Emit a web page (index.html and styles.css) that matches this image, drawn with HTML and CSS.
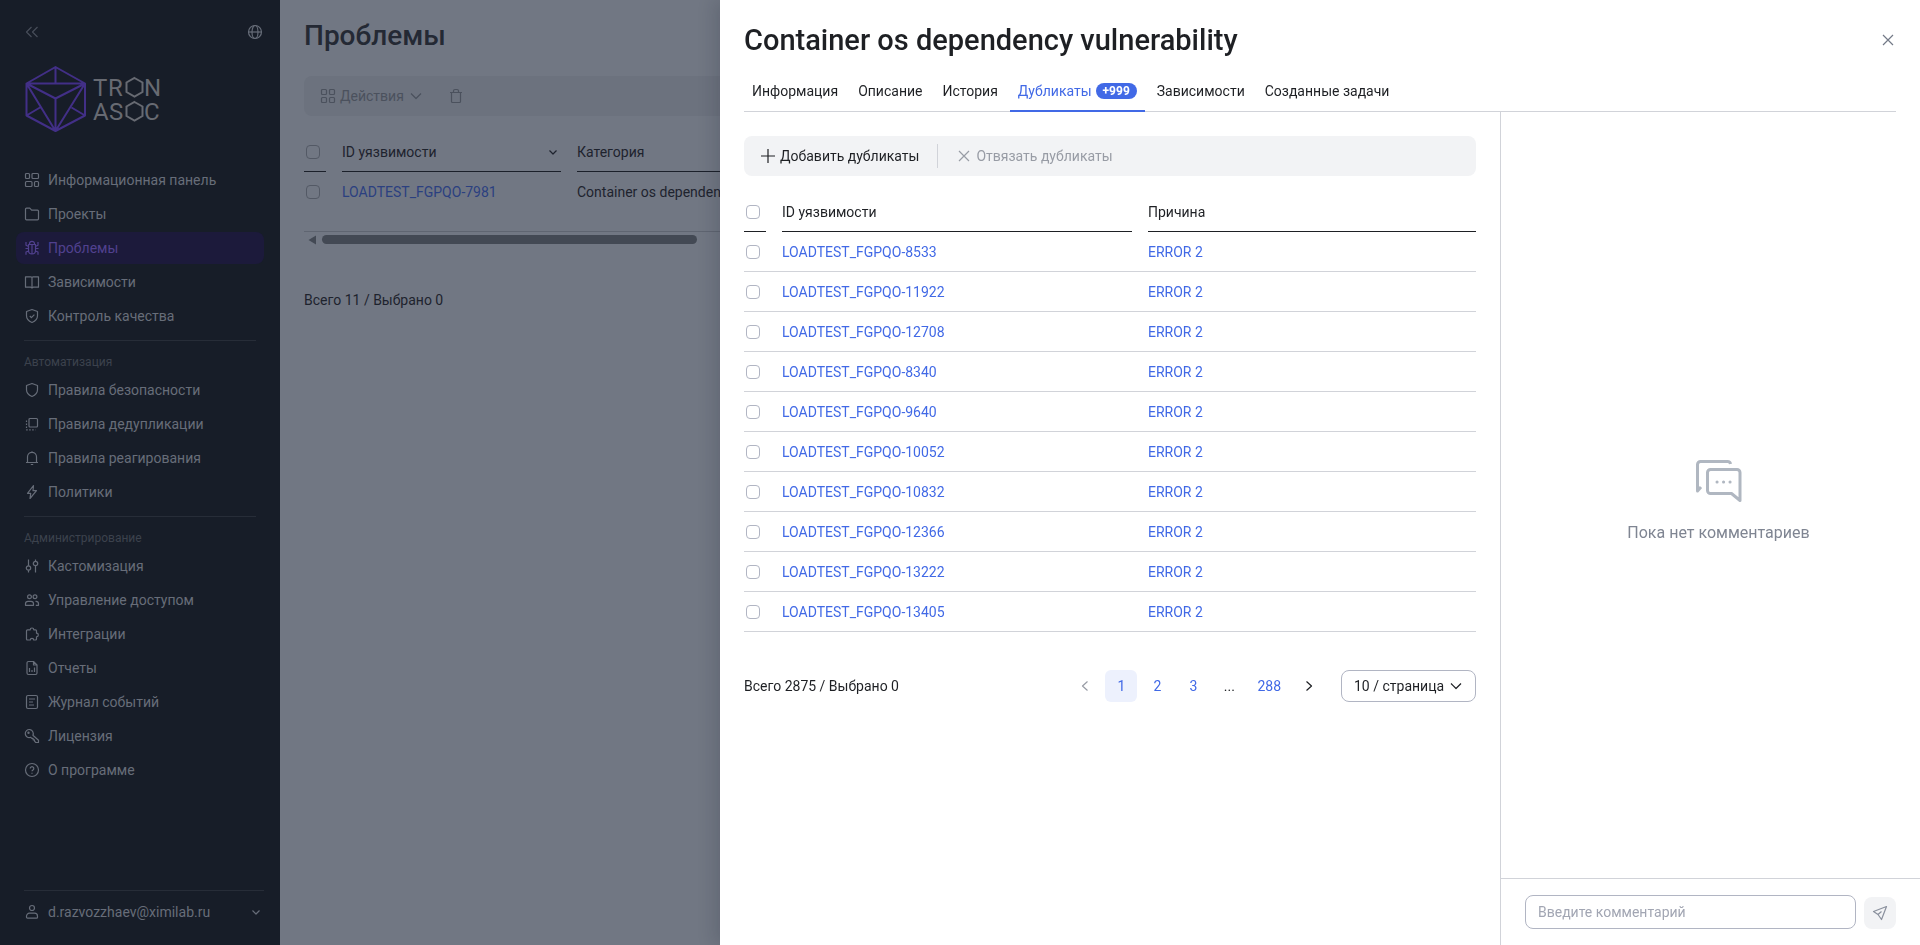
FILE: index.html
```html
<!DOCTYPE html>
<html lang="ru">
<head>
    <meta charset="UTF-8">
    <meta name="viewport" content="width=device-width, initial-scale=1.0">
    <title>Container os dependency vulnerability</title>
    <link rel="stylesheet" href="styles.css">
</head>
<body>
<div class="layout">
    <aside class="sidebar">
        <div class="sidebar-top">
            <button type="button" class="icon-btn dim" aria-label="Свернуть меню">
                <svg class="icon" viewBox="0 0 16 16"><path d="M7.500 3 2.500 8l5 5M13.500 3l-5 5 5 5"/></svg>
            </button>
            <button type="button" class="icon-btn" aria-label="Язык">
                <svg class="icon" viewBox="0 0 16 16"><circle cx="8" cy="8" r="6.500"/><ellipse cx="8" cy="8" rx="3" ry="6.500"/><path d="M1.500 8h13"/></svg>
            </button>
        </div>
        <a href="#" class="logo" aria-label="TRON ASOC">
            <svg width="140" height="68" viewBox="0 0 140 68">
                <g class="logo-mark">
                    <path d="M31.500 2 61 18.500v32L31.500 66 2.500 50.500v-32zM2.500 18.500H61M31.500 2v16.500M2.500 18.500l29 15 29.500-15M31.500 33.500V66M2.500 18.500 31.500 66 61 18.500M2.500 50.500 16 42.500M61 50.500 47.500 42.500"/>
                </g>
                <g class="logo-text">
                    <text y="31"><tspan x="69">T</tspan><tspan x="84">R</tspan><tspan x="120">N</tspan></text>
                    <text y="55"><tspan x="69">A</tspan><tspan x="85">S</tspan><tspan x="120">C</tspan></text>
                </g>
                <path class="logo-hex" d="m110.500 13 8 4.500v9.500l-8 4.500-8-4.500v-9.500zM110.500 37l8 4.500v9.500l-8 4.500-8-4.500v-9.500z"/>
            </svg>
        </a>
        <nav class="menu">
            <a href="#" class="menu-item">
                <svg class="icon" viewBox="0 0 16 16"><rect x="1.500" y="1.500" width="4" height="5" rx="1"/><rect x="8" y="1.500" width="6.500" height="5" rx="1"/><rect x="1.500" y="9.500" width="6.500" height="5" rx="1"/><rect x="10.500" y="9.500" width="4" height="5" rx="1"/></svg>
                Информационная панель
            </a>
            <a href="#" class="menu-item">
                <svg class="icon" viewBox="0 0 16 16"><path d="M1.500 12.800V3.200a1 1 0 0 1 1-1h3.300l1.800 1.900h5.900a1 1 0 0 1 1 1v7.700a1 1 0 0 1-1 1h-11a1 1 0 0 1-1-1z"/></svg>
                Проекты
            </a>
            <a href="#" class="menu-item active">
                <svg class="icon" viewBox="0 0 16 16"><path d="M4.500 4.500h7v6a3.500 3.500 0 0 1-7 0zM5.500 4.500V3.800a2.500 2.500 0 0 1 5 0v.7M8 4.500V14M4.500 6.500 2 5.200V2M11.500 6.500 14 5.200V2M4.500 8.500h-3M11.500 8.500h3M4.700 11 2 12v2.700M11.300 11l2.700 1v2.700"/></svg>
                Проблемы
            </a>
            <a href="#" class="menu-item">
                <svg class="icon" viewBox="0 0 16 16"><path d="M8 3.500 6.800 2.800H1.500v10.400h5.300l1.200.7 1.200-.7h5.300V2.800H9.200zM8 3.500v10"/></svg>
                Зависимости
            </a>
            <a href="#" class="menu-item">
                <svg class="icon" viewBox="0 0 16 16"><path d="m8 1.500 5.500 2v4.300c0 3.200-2.300 5.400-5.500 6.700-3.200-1.300-5.500-3.500-5.500-6.700V3.500zM5.800 8l1.600 1.600 3-3"/></svg>
                Контроль качества
            </a>
        </nav>
        <hr class="menu-line">
        <div class="menu-title">Автоматизация</div>
        <nav class="menu">
            <a href="#" class="menu-item">
                <svg class="icon" viewBox="0 0 16 16"><path d="m8 1.500 5.500 2v4.300c0 3.200-2.300 5.400-5.500 6.700-3.200-1.300-5.500-3.500-5.500-6.700V3.500z"/></svg>
                Правила безопасности
            </a>
            <a href="#" class="menu-item">
                <svg class="icon" viewBox="0 0 16 16"><rect x="5" y="2.500" width="8.500" height="8.500" rx="1"/><path stroke-dasharray="1.500 1.500" d="M2.500 4.500v9.300h9"/></svg>
                Правила дедупликации
            </a>
            <a href="#" class="menu-item">
                <svg class="icon" viewBox="0 0 16 16"><path d="M2 12.500h12M3.500 12.500V6.800a4.500 4.500 0 0 1 9 0v5.700M6.800 14.500h2.400M8 1.200v1"/></svg>
                Правила реагирования
            </a>
            <a href="#" class="menu-item">
                <svg class="icon" viewBox="0 0 16 16"><path d="M9.500 1.500 3.500 9.300h3.200L6 14.500l6.500-7.800H9z"/></svg>
                Политики
            </a>
        </nav>
        <hr class="menu-line">
        <div class="menu-title">Администрирование</div>
        <nav class="menu">
            <a href="#" class="menu-item">
                <svg class="icon" viewBox="0 0 16 16"><circle cx="4.500" cy="10" r="2.200"/><circle cx="11.500" cy="5.500" r="2.200"/><path d="M4.500 1.500v6.300M4.500 12.200v2.300M11.500 1.500v1.800M11.500 7.700v6.800"/></svg>
                Кастомизация
            </a>
            <a href="#" class="menu-item">
                <svg class="icon" viewBox="0 0 16 16"><circle cx="5.500" cy="4.800" r="1.900"/><circle cx="11" cy="4.800" r="1.900"/><path d="M1.500 13.300v-1.500a2.500 2.500 0 0 1 2.500-2.500h3a2.500 2.500 0 0 1 2.500 2.500v1.500zM11.500 9.300h.5a2.500 2.500 0 0 1 2.500 2.500v1.500h-2.700"/></svg>
                Управление доступом
            </a>
            <a href="#" class="menu-item">
                <svg class="icon" viewBox="0 0 16 16"><path d="M3.500 3.800h2.700a1.800 1.800 0 0 1 3.600 0h1.700a1 1 0 0 1 1 1v2.400a1.800 1.800 0 0 1 0 3.600v2.200a1 1 0 0 1-1 1H9.700a1.700 1.700 0 0 0-3.400 0H3.500a1 1 0 0 1-1-1V4.800a1 1 0 0 1 1-1z"/></svg>
                Интеграции
            </a>
            <a href="#" class="menu-item">
                <svg class="icon" viewBox="0 0 16 16"><path d="M9.500 1.500h-5a1.500 1.500 0 0 0-1.500 1.500v10a1.500 1.500 0 0 0 1.500 1.500h7A1.500 1.500 0 0 0 13 13V5zM9.500 1.500V5H13M5.500 8v4M8 10v2M10.500 7.500V12"/></svg>
                Отчеты
            </a>
            <a href="#" class="menu-item">
                <svg class="icon" viewBox="0 0 16 16"><rect x="2.500" y="1.500" width="11" height="13" rx="1.500"/><path d="M5 5h6M5 8h4M5 11h5"/></svg>
                Журнал событий
            </a>
            <a href="#" class="menu-item">
                <svg class="icon" viewBox="0 0 16 16"><path d="M8.900 7.200a4 4 0 1 0-2.300 2.100l1.200 1.100h1.300v1.400h1.400v1.400l1.300 1.300h2.700v-2.200z"/><circle cx="4.500" cy="4.700" r=".6"/></svg>
                Лицензия
            </a>
            <a href="#" class="menu-item">
                <svg class="icon" viewBox="0 0 16 16"><circle cx="8" cy="8" r="6.500"/><path d="M6.200 6.500a1.800 1.800 0 1 1 2.700 1.600c-.6.300-.9.600-.9 1.200M8 10.800v1"/></svg>
                О программе
            </a>
        </nav>
        <button type="button" class="user">
            <svg class="icon" viewBox="0 0 16 16"><circle cx="8" cy="4" r="2.500"/><path d="M2.500 13.200v-1a3 3 0 0 1 3-3h5a3 3 0 0 1 3 3v1a1 1 0 0 1-1 1h-9a1 1 0 0 1-1-1z"/></svg>
            <span class="user-name">d.razvozzhaev@ximilab.ru</span>
            <svg class="icon" viewBox="0 0 16 16"><path d="m4.500 6.500 3.500 3.500 3.500-3.500"/></svg>
        </button>
    </aside>

    <main class="content">
        <h1 class="page-title">Проблемы</h1>
        <div class="toolbar">
            <button type="button" class="tool" disabled>
                <svg class="icon" viewBox="0 0 16 16"><rect x="1.500" y="1.500" width="5" height="5" rx="1"/><rect x="9.500" y="1.500" width="5" height="5" rx="1"/><rect x="1.500" y="9.500" width="5" height="5" rx="1"/><rect x="9.500" y="9.500" width="5" height="5" rx="1"/></svg>
                Действия
                <svg class="icon" viewBox="0 0 16 16"><path d="m3 5.500 5 5 5-5"/></svg>
            </button>
            <button type="button" class="tool" disabled aria-label="Удалить">
                <svg class="icon" viewBox="0 0 16 16"><path d="M2 4.500h12M3.500 4.500v9a1 1 0 0 0 1 1h7a1 1 0 0 0 1-1v-9M5.500 4.500V3a1.500 1.500 0 0 1 1.500-1.500h2A1.500 1.500 0 0 1 10.500 3v1.500"/></svg>
            </button>
        </div>
        <div class="table-scroll">
            <table class="table issues">
                <thead>
                    <tr>
                        <th class="col-check"><div class="th"><input type="checkbox" aria-label="Выбрать все"></div></th>
                        <th class="col-id"><div class="th">ID уязвимости <svg class="icon" viewBox="0 0 16 16"><path d="m4.500 6.500 3.500 3.500 3.500-3.500"/></svg></div></th>
                        <th><div class="th">Категория</div></th>
                    </tr>
                </thead>
                <tbody>
                    <tr>
                        <td><input type="checkbox" aria-label="Выбрать LOADTEST_FGPQO-7981"></td>
                        <td><a href="#">LOADTEST_FGPQO-7981</a></td>
                        <td>Container os dependency vulnerability</td>
                    </tr>
                </tbody>
            </table>
        </div>
        <div class="scrollbar">
            <svg width="8" height="10" viewBox="0 0 8 10"><path d="M8 .5v9L.5 5z"/></svg>
            <div class="scroll-thumb"></div>
        </div>
        <div class="total">Всего 11 / Выбрано 0</div>
    </main>
</div>

<section class="drawer" role="dialog" aria-labelledby="drawer-title">
    <header class="drawer-header">
        <h2 id="drawer-title" class="drawer-title">Container os dependency vulnerability</h2>
        <button type="button" class="icon-btn close" aria-label="Закрыть">
            <svg class="icon" viewBox="0 0 16 16"><path d="m3 3 10 10M13 3 3 13"/></svg>
        </button>
    </header>
    <nav class="tabs">
        <a href="#" class="tab">Информация</a>
        <a href="#" class="tab">Описание</a>
        <a href="#" class="tab">История</a>
        <a href="#" class="tab active">Дубликаты <span class="badge">+999</span></a>
        <a href="#" class="tab">Зависимости</a>
        <a href="#" class="tab">Созданные задачи</a>
    </nav>
    <div class="drawer-body">
        <div class="duplicates">
            <div class="toolbar">
                <button type="button" class="tool">
                    <svg class="icon" viewBox="0 0 16 16"><path d="M8 1v14M1 8h14"/></svg>
                    Добавить дубликаты
                </button>
                <span class="tool-line"></span>
                <button type="button" class="tool" disabled>
                    <svg class="icon" viewBox="0 0 16 16"><path d="m3 3 10 10M13 3 3 13"/></svg>
                    Отвязать дубликаты
                </button>
            </div>
            <table class="table">
                <thead>
                    <tr>
                        <th class="col-check"><div class="th"><input type="checkbox" aria-label="Выбрать все"></div></th>
                        <th class="col-half"><div class="th">ID уязвимости</div></th>
                        <th><div class="th">Причина</div></th>
                    </tr>
                </thead>
                <tbody>
                    <tr><td><input type="checkbox" aria-label="Выбрать"></td><td><a href="#">LOADTEST_FGPQO-8533</a></td><td><a href="#">ERROR 2</a></td></tr>
                    <tr><td><input type="checkbox" aria-label="Выбрать"></td><td><a href="#">LOADTEST_FGPQO-11922</a></td><td><a href="#">ERROR 2</a></td></tr>
                    <tr><td><input type="checkbox" aria-label="Выбрать"></td><td><a href="#">LOADTEST_FGPQO-12708</a></td><td><a href="#">ERROR 2</a></td></tr>
                    <tr><td><input type="checkbox" aria-label="Выбрать"></td><td><a href="#">LOADTEST_FGPQO-8340</a></td><td><a href="#">ERROR 2</a></td></tr>
                    <tr><td><input type="checkbox" aria-label="Выбрать"></td><td><a href="#">LOADTEST_FGPQO-9640</a></td><td><a href="#">ERROR 2</a></td></tr>
                    <tr><td><input type="checkbox" aria-label="Выбрать"></td><td><a href="#">LOADTEST_FGPQO-10052</a></td><td><a href="#">ERROR 2</a></td></tr>
                    <tr><td><input type="checkbox" aria-label="Выбрать"></td><td><a href="#">LOADTEST_FGPQO-10832</a></td><td><a href="#">ERROR 2</a></td></tr>
                    <tr><td><input type="checkbox" aria-label="Выбрать"></td><td><a href="#">LOADTEST_FGPQO-12366</a></td><td><a href="#">ERROR 2</a></td></tr>
                    <tr><td><input type="checkbox" aria-label="Выбрать"></td><td><a href="#">LOADTEST_FGPQO-13222</a></td><td><a href="#">ERROR 2</a></td></tr>
                    <tr><td><input type="checkbox" aria-label="Выбрать"></td><td><a href="#">LOADTEST_FGPQO-13405</a></td><td><a href="#">ERROR 2</a></td></tr>
                </tbody>
            </table>
            <div class="table-footer">
                <div>Всего 2875 / Выбрано 0</div>
                <div class="pagination">
                    <button type="button" class="page" disabled aria-label="Назад">
                        <svg class="icon" viewBox="0 0 16 16"><path d="m10.500 3.500-5 4.500 5 4.500"/></svg>
                    </button>
                    <button type="button" class="page current">1</button>
                    <button type="button" class="page">2</button>
                    <button type="button" class="page">3</button>
                    <span class="page dots">...</span>
                    <button type="button" class="page">288</button>
                    <button type="button" class="page next" aria-label="Вперед">
                        <svg class="icon" viewBox="0 0 16 16"><path d="m5.500 3.500 5 4.500-5 4.500"/></svg>
                    </button>
                    <div class="page-size">
                        <select aria-label="Строк на странице">
                            <option>10 / страница</option>
                            <option>20 / страница</option>
                            <option>50 / страница</option>
                        </select>
                        <svg class="icon" viewBox="0 0 16 16"><path d="m3 5.500 5 5 5-5"/></svg>
                    </div>
                </div>
            </div>
        </div>
        <aside class="comments">
            <div class="comments-empty">
                <svg width="48" height="44" viewBox="0 0 48 44">
                    <path d="M35.500 5a3 3 0 0 0-3-2.500H5.500a3 3 0 0 0-3 3V32l3.500-4"/>
                    <path d="M15.500 10.500H42a3 3 0 0 1 3 3V41.500l-8.500-7H15.500a3 3 0 0 1-3-3v-18a3 3 0 0 1 3-3z"/>
                    <path class="bubble-dots" d="M22 23h.1M28.500 23h.1M35 23h.1"/>
                </svg>
                <div>Пока нет комментариев</div>
            </div>
            <form class="comment-form">
                <input type="text" class="comment-input" placeholder="Введите комментарий" aria-label="Комментарий">
                <button type="button" class="send" aria-label="Отправить">
                    <svg class="icon" viewBox="0 0 16 16"><path d="M14.500 1.500 1.500 6.500l4.500 3 3.500 5zM6 9.500l3.500-3"/></svg>
                </button>
            </form>
        </aside>
    </div>
</section>
</body>
</html>
```
FILE: styles.css
```css
* {
    box-sizing: border-box;
}
body {
    margin: 0;
    font-family: Roboto, "Liberation Sans", sans-serif;
    font-size: 14px;
    line-height: 20px;
    color: #1e2024;
}
a {
    color: #4169e6;
    text-decoration: none;
}
button, input, select {
    font: inherit;
    color: inherit;
}
button {
    padding: 0;
    border: none;
    background: none;
    cursor: pointer;
}
.icon {
    width: 16px;
    height: 16px;
    flex: none;
    fill: none;
    stroke: currentColor;
    stroke-width: 1.2;
    stroke-linejoin: round;
}
.icon-btn {
    display: flex;
}
input[type="checkbox"] {
    appearance: none;
    display: block;
    width: 14px;
    height: 14px;
    margin: 0 2px;
    border: 1px solid #b1b5c3;
    border-radius: 4px;
}

.layout {
    display: flex;
    min-height: 100vh;
}

/* sidebar */
.sidebar {
    display: flex;
    flex-direction: column;
    flex: none;
    width: 280px;
    padding: 24px 16px 16px;
    background: #171d28;
    color: #676d79;
}
.sidebar-top {
    display: flex;
    justify-content: space-between;
    padding: 0 1px 0 8px;
}
.dim {
    color: #474d59;
}
.logo {
    display: block;
    height: 68px;
    margin: 25px 8px 31px;
}
.logo-mark {
    fill: none;
    stroke: #422f87;
    stroke-width: 2;
    stroke-linejoin: round;
}
.logo-text {
    fill: #676a72;
    font-size: 24px;
    font-weight: 400;
}
.logo-hex {
    fill: none;
    stroke: #676a72;
    stroke-width: 2;
}
.menu {
    display: flex;
    flex-direction: column;
    gap: 2px;
}
.menu-item {
    display: flex;
    align-items: center;
    gap: 8px;
    height: 32px;
    padding: 0 8px;
    border-radius: 8px;
    color: #676d79;
}
.menu-item.active {
    background: #1c1a3b;
    color: #51418f;
}
.menu-line {
    width: auto;
    margin: 8px;
    border: none;
    border-top: 1px solid #272d38;
}
.menu-title {
    padding: 3px 8px 2px;
    font-size: 12px;
    color: #3c424d;
}
.user {
    display: flex;
    align-items: center;
    gap: 8px;
    height: 39px;
    margin-top: auto;
    margin-left: 8px;
    padding-top: 4px;
    border-top: 1px solid #272d38;
    text-align: left;
}
.user-name {
    flex: 1;
}

/* page under the drawer */
.content {
    flex: 1;
    min-width: 0;
    padding: 16px 24px;
    background: #717783;
    color: #1e232e;
}
.page-title {
    margin: 0 0 20px;
    font-size: 28px;
    line-height: 40px;
    font-weight: 500;
    color: #242934;
}
.toolbar {
    display: flex;
    align-items: center;
    gap: 18px;
    height: 40px;
    padding: 0 16px;
    border-radius: 8px;
    background: #f2f3f5;
}
.tool {
    display: flex;
    align-items: center;
    gap: 4px;
}
.tool:disabled {
    color: #989ca5;
}
.tool-line {
    width: 1px;
    height: 24px;
    background: #d1d3d9;
}
.content .toolbar {
    gap: 24px;
    background: #6c727e;
}
.content .tool {
    color: #4b515d;
}
.content .table a {
    color: #2b4080;
}
.content input[type="checkbox"] {
    border-color: #535965;
}
.content .th {
    border-color: #1b202a;
}
.content .table td {
    border: none;
}
.table-scroll {
    overflow: hidden;
    height: 116px;
    border-bottom: 1px solid #5f6571;
}
.scrollbar {
    display: flex;
    align-items: center;
    gap: 6px;
    height: 15px;
    padding-left: 4px;
    fill: #434954;
}
.scroll-thumb {
    width: 375px;
    height: 9px;
    border-radius: 5px;
    background: #434954;
}
.total {
    margin-top: 43px;
}

/* tables */
.table {
    width: 100%;
    border-spacing: 0;
    table-layout: fixed;
}
.table th {
    padding: 0 16px 0 0;
    font-weight: 400;
    text-align: left;
}
.table th:last-child {
    padding-right: 0;
}
.th {
    display: flex;
    align-items: center;
    justify-content: space-between;
    height: 40px;
    border-bottom: 1px solid #1e2024;
}
.table td {
    height: 40px;
    padding: 0;
    border-bottom: 1px solid #d1d3d9;
}
.col-check {
    width: 38px;
}
.col-id {
    width: 235px;
}
.col-half {
    width: 50%;
}
.issues {
    margin-top: 16px;
}

/* drawer */
.drawer {
    position: fixed;
    top: 0;
    right: 0;
    bottom: 0;
    display: flex;
    flex-direction: column;
    width: 62.5%;
    background: #fff;
    box-shadow: -6px 0 16px rgba(20, 26, 38, 0.15);
}
.drawer-header {
    display: flex;
    align-items: center;
    justify-content: space-between;
    padding: 20px 24px 12px;
}
.drawer-title {
    margin: 0;
    font-size: 29px;
    line-height: 40px;
    font-weight: 500;
}
.close {
    color: #737987;
}
.tabs {
    display: flex;
    gap: 4px;
    height: 40px;
    margin: 0 24px;
    border-bottom: 1px solid #d1d3d9;
}
.tab {
    display: flex;
    align-items: center;
    gap: 4px;
    height: 40px;
    padding: 0 8px;
    border-bottom: 2px solid transparent;
    color: #1e2024;
}
.tab.active {
    border-color: #4169e6;
    color: #4169e6;
}
.badge {
    padding: 0 7px;
    border-radius: 8px;
    background: #4169e6;
    color: #fff;
    font-size: 12px;
    line-height: 16px;
    font-weight: 700;
}
.drawer-body {
    display: flex;
    flex: 1;
    min-height: 0;
}
.duplicates {
    flex: 1;
    padding: 24px;
}
.duplicates .table {
    margin-top: 16px;
}
.table-footer {
    display: flex;
    align-items: center;
    justify-content: space-between;
    margin-top: 38px;
}
.pagination {
    display: flex;
    gap: 4px;
}
.page {
    display: flex;
    align-items: center;
    justify-content: center;
    min-width: 32px;
    height: 32px;
    padding: 0 8px;
    border-radius: 6px;
    color: #4169e6;
}
.page:disabled {
    color: #989ca5;
}
.page.current {
    background: #edf1fd;
}
.page.dots, .page.next {
    color: #1e2024;
}
.page-size {
    display: flex;
    align-items: center;
    width: 135px;
    margin-left: 12px;
    padding-right: 11px;
    border: 1px solid #b1b5c3;
    border-radius: 8px;
}
.page-size select {
    appearance: none;
    flex: 1;
    min-width: 0;
    height: 30px;
    padding: 0 0 0 12px;
    border: none;
    background: none;
}

/* comments */
.comments {
    display: flex;
    flex-direction: column;
    width: 420px;
    border-left: 1px solid #d1d3d9;
}
.comments-empty {
    display: flex;
    flex: 1;
    flex-direction: column;
    align-items: center;
    justify-content: center;
    gap: 18px;
    padding: 14px 0 0 16px;
    font-size: 16px;
    line-height: 24px;
    color: #7f8592;
}
.comments-empty svg {
    fill: none;
    stroke: #b0b7c1;
    stroke-width: 3;
    stroke-linejoin: round;
}
.comments-empty .bubble-dots {
    stroke-linecap: round;
}
.comment-form {
    display: flex;
    align-items: flex-end;
    gap: 8px;
    padding: 16px 24px;
    border-top: 1px solid #d1d3d9;
}
.comment-input {
    flex: 1;
    min-width: 0;
    height: 34px;
    padding: 0 12px;
    border: 1px solid #b1b5c3;
    border-radius: 8px;
}
.comment-input::placeholder {
    color: #a2a6b3;
}
.send {
    display: flex;
    align-items: center;
    justify-content: center;
    width: 32px;
    height: 32px;
    border-radius: 8px;
    background: #f2f3f5;
    color: #8a909d;
}
```
